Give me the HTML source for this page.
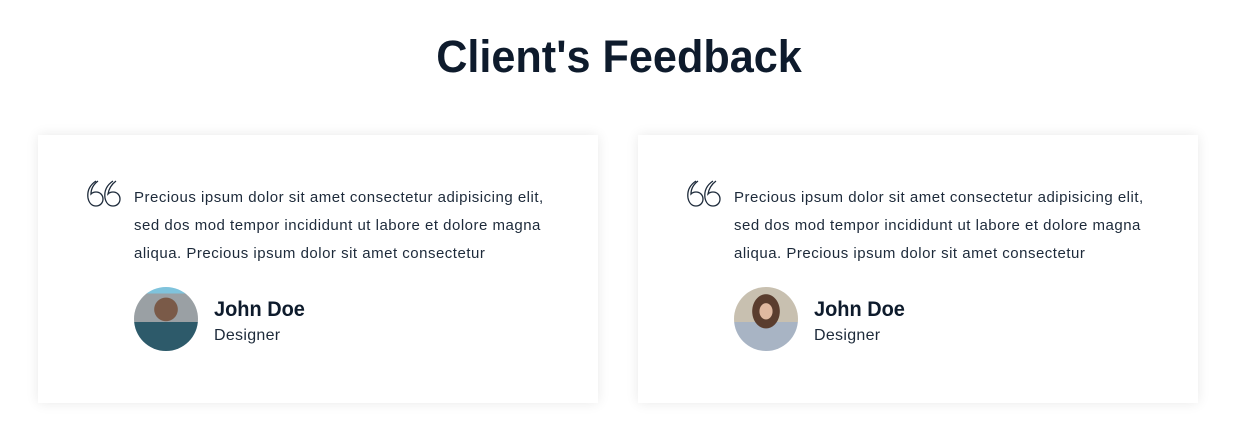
<!DOCTYPE html>
<html><head><style>
body{margin:0;width:1238px;height:436px;background:#fff;font-family:"Liberation Sans",sans-serif;color:#0e1b2c;position:relative;overflow:hidden}
h1{position:absolute;top:28px;left:0;width:1238px;text-align:center;margin:0;font-size:45px;font-weight:bold;line-height:58px;transform:scaleX(0.96)}
.card{position:absolute;top:135px;width:560px;height:268px;background:#fff;box-shadow:0 0 12px rgba(0,0,0,0.09)}
.q{position:absolute;left:48px;top:44px}
.t{position:absolute;left:96px;top:49px;width:450px;white-space:nowrap;font-size:15px;letter-spacing:0.5px;line-height:28px;color:#1d2a3a}
.av{position:absolute;left:96px;top:152px;width:64px;height:64px;border-radius:50%;overflow:hidden}
.n{position:absolute;left:176px;top:163px;font-size:21px;font-weight:bold;transform:scaleX(0.95);transform-origin:left}
.d{position:absolute;left:176px;top:192px;font-size:16px;color:#1d2a3a;letter-spacing:0.3px}
</style></head><body>
<h1>Client's Feedback</h1>
<div class="card" style="left:38px">
<svg class="q" width="40" height="30" viewBox="0 0 40 30" fill="none" stroke="#1d2a3a" stroke-width="1.3"><path d="M10 2C4 6 1 12 2 19c1 5 4 8 8 8s7-3 7-7-3-7-7-7c-2 0-4 1-5 2C5 9 8 5 12 2"/><path d="M27 2c-6 4-9 10-8 17 1 5 4 8 8 8s7-3 7-7-3-7-7-7c-2 0-4 1-5 2 1-6 4-10 8-13"/></svg>
<div class="t">Precious ipsum dolor sit amet consectetur adipisicing elit,<br>sed dos mod tempor incididunt ut labore et dolore magna<br>aliqua. Precious ipsum dolor sit amet consectetur</div>
<div class="av" style="background:radial-gradient(circle at 50% 35%,#7a5a48 0 22%,transparent 23%),linear-gradient(180deg,#7fc3dc 0 10%,#9aa0a4 10% 55%,#2d5a6a 55%)"></div>
<div class="n">John Doe</div><div class="d">Designer</div>
</div>
<div class="card" style="left:638px">
<svg class="q" width="40" height="30" viewBox="0 0 40 30" fill="none" stroke="#1d2a3a" stroke-width="1.3"><path d="M10 2C4 6 1 12 2 19c1 5 4 8 8 8s7-3 7-7-3-7-7-7c-2 0-4 1-5 2C5 9 8 5 12 2"/><path d="M27 2c-6 4-9 10-8 17 1 5 4 8 8 8s7-3 7-7-3-7-7-7c-2 0-4 1-5 2 1-6 4-10 8-13"/></svg>
<div class="t">Precious ipsum dolor sit amet consectetur adipisicing elit,<br>sed dos mod tempor incididunt ut labore et dolore magna<br>aliqua. Precious ipsum dolor sit amet consectetur</div>
<div class="av" style="background:radial-gradient(ellipse at 50% 38%,#e0b9a0 0 14%,#5a3d2e 15% 30%,transparent 31%),linear-gradient(180deg,#c8c0b0 0 55%,#a8b4c4 55%)"></div>
<div class="n">John Doe</div><div class="d">Designer</div>
</div>
</body></html>
